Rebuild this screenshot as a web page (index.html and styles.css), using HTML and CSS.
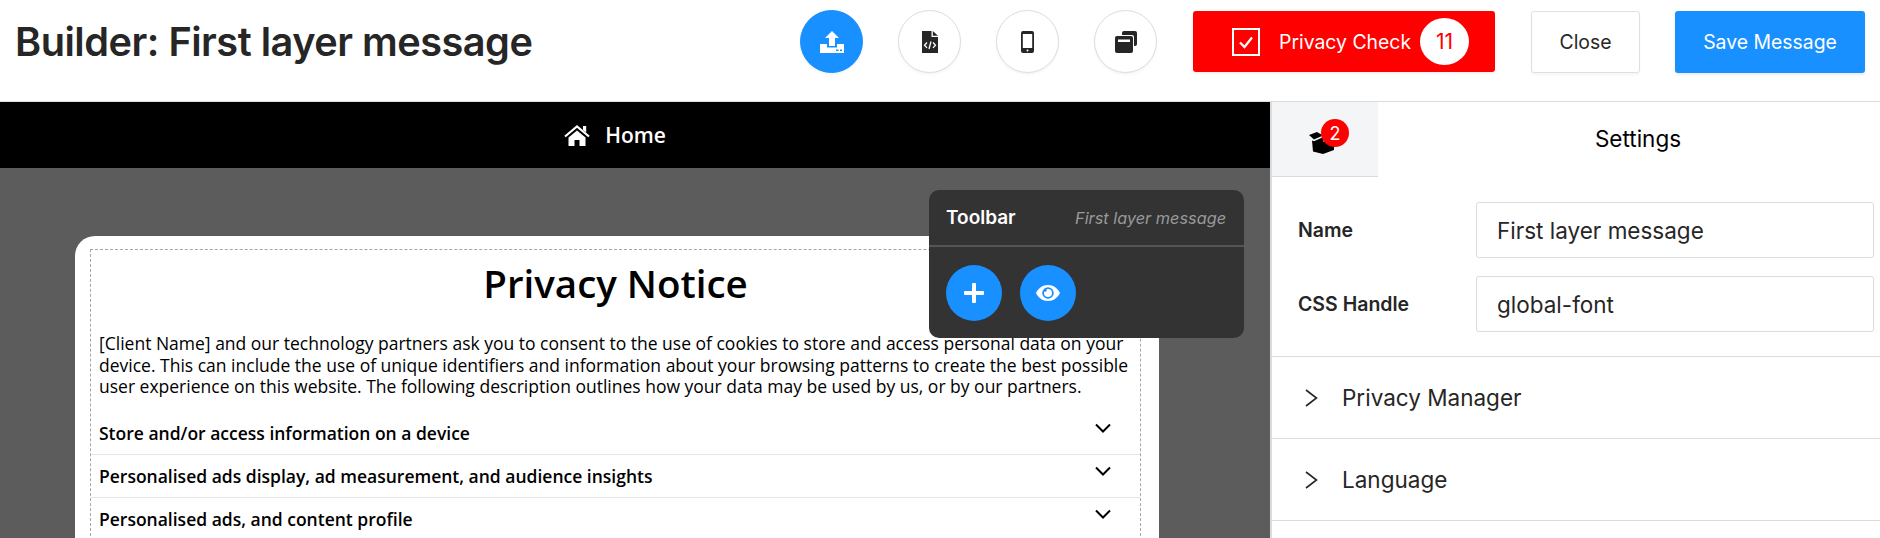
FILE: index.html
```html
<!DOCTYPE html>
<html lang="en">
<head>
  <meta charset="UTF-8">
  <title>Builder: First layer message</title>
  <link rel="stylesheet" href="styles.css">
</head>
<body>

<!-- Top bar -->
<header class="topbar">
  <h1 class="page-title">Builder: First layer message</h1>
  <div class="actions">
    <div class="circle-group">
      <button class="circle active">
        <svg width="24" height="22" viewBox="0 0 24 22"><path fill="#fff" d="M12 0l7 7h-4v8H9V7H5z"/><path fill="#fff" d="M0 13h7v3.500h10V13h7v9H0z"/><rect x="16" y="18.500" width="2.500" height="1.500" fill="#1890ff"/><rect x="20" y="18.500" width="2" height="1.500" fill="#1890ff"/></svg>
      </button>
      <button class="circle">
        <svg width="16" height="22" viewBox="0 0 16 22"><path fill="#262626" d="M0 0h9.500v6H16v16H0z"/><path fill="#262626" d="M10.800 0L16 4.800h-5.200z"/><path fill="none" stroke="#fff" stroke-width="1.300" d="M5 11.500l-2.500 2.700L5 16.900M11 11.500l2.500 2.700L11 16.900M9 10.500l-2 7.500"/></svg>
      </button>
      <button class="circle">
        <svg width="13" height="22" viewBox="0 0 13 22"><rect width="13" height="22" rx="2" fill="#262626"/><rect x="1.800" y="3" width="9.400" height="14" fill="#fff"/><circle cx="6.500" cy="19.500" r="1" fill="#fff"/></svg>
      </button>
      <button class="circle">
        <svg width="22" height="22" viewBox="0 0 22 22"><path fill="#262626" d="M7 2a2 2 0 0 1 2-2h11a2 2 0 0 1 2 2v11a2 2 0 0 1-2 2h-1V6a2 2 0 0 0-2-2H7z"/><rect y="5" width="18" height="17" rx="2" fill="#262626"/><rect x="3" y="8.500" width="12" height="2.500" fill="#fff"/></svg>
      </button>
    </div>
    <button class="check-btn">
      <svg width="28" height="28" viewBox="0 0 28 28"><rect x="1" y="1" width="26" height="26" fill="none" stroke="#fff" stroke-width="2"/><path fill="none" stroke="#fff" stroke-width="2.200" d="M8 14.500l4.500 4.500L20 9.500"/></svg>
      <span class="check-label">Privacy Check</span>
      <span class="check-count">11</span>
    </button>
    <button class="btn-close">Close</button>
    <button class="btn-save">Save Message</button>
  </div>
</header>

<div class="main">
  <!-- Preview -->
  <section class="canvas">
    <nav class="site-nav">
      <svg width="26" height="21" viewBox="0 0 26 21"><path fill="none" stroke="#fff" stroke-width="2.200" d="M1 11.500L13 1.500l12 10"/><path fill="#fff" d="M19 1h3.200v6.500L19 5z"/><path fill="#fff" d="M13 5.500l8.500 7V21H15.500v-6h-5v6H4.500v-8.500z"/></svg>
      <span>Home</span>
    </nav>
    <div class="notice-wrap">
      <div class="notice">
        <div class="notice-inner">
          <h2 class="notice-title">Privacy Notice</h2>
          <p class="notice-text">[Client Name] and our technology partners ask you to consent to the use of cookies to store and access personal data on your device. This can include the use of unique identifiers and information about your browsing patterns to create the best possible user experience on this website. The following description outlines how your data may be used by us, or by our partners.</p>
          <div class="purpose">
            <span>Store and/or access information on a device</span>
            <svg class="chevron" width="16" height="10" viewBox="0 0 16 10"><path d="M1 1.500l7 7 7-7"/></svg>
          </div>
          <div class="purpose">
            <span>Personalised ads display, ad measurement, and audience insights</span>
            <svg class="chevron" width="16" height="10" viewBox="0 0 16 10"><path d="M1 1.500l7 7 7-7"/></svg>
          </div>
          <div class="purpose">
            <span>Personalised ads, and content profile</span>
            <svg class="chevron" width="16" height="10" viewBox="0 0 16 10"><path d="M1 1.500l7 7 7-7"/></svg>
          </div>
        </div>
      </div>
    </div>

    <!-- Floating toolbar -->
    <div class="toolbar">
      <div class="toolbar-head">
        <span class="toolbar-title">Toolbar</span>
        <span class="toolbar-sub">First layer message</span>
      </div>
      <div class="toolbar-body">
        <button class="tool-btn">
          <svg width="20" height="20" viewBox="0 0 20 20"><path fill="#fff" d="M8 1a1 1 0 0 1 1-1h2a1 1 0 0 1 1 1v7h7a1 1 0 0 1 1 1v2a1 1 0 0 1-1 1h-7v7a1 1 0 0 1-1 1H9a1 1 0 0 1-1-1v-7H1a1 1 0 0 1-1-1V9a1 1 0 0 1 1-1h7z"/></svg>
        </button>
        <button class="tool-btn">
          <svg width="24" height="16" viewBox="0 0 24 16"><path fill="#fff" fill-rule="evenodd" d="M12 0c5.500 0 9.800 3.500 12 8-2.200 4.500-6.500 8-12 8S2.200 12.500 0 8c2.200-4.500 6.500-8 12-8zm0 2.200A5.800 5.800 0 1 0 12 13.800 5.800 5.800 0 0 0 12 2.200z"/><path fill="#fff" d="M12 4a4 4 0 1 1-4 4c0-.5.100-1 .300-1.400a1.800 1.800 0 0 0 2.400-2.300C11.100 4.100 11.500 4 12 4z"/></svg>
        </button>
      </div>
    </div>
  </section>

  <!-- Settings panel -->
  <aside class="sidebar">
    <div class="tabs">
      <div class="tab-icon">
        <svg width="26" height="22" viewBox="0 0 26 22"><path fill="#000" d="M0 3l8-3 6 3.500-9 4z"/><path fill="#000" d="M3 8.500l2 .8 9-4 .5 4.700L25 7v11l-11 4-10-2.500z"/></svg>
        <span class="tab-badge">2</span>
      </div>
      <div class="tab-title">Settings</div>
    </div>
    <div class="fields">
      <div class="field">
        <label class="field-label">Name</label>
        <div class="field-input">First layer message</div>
      </div>
      <div class="field">
        <label class="field-label">CSS Handle</label>
        <div class="field-input">global-font</div>
      </div>
    </div>
    <div class="acc-row">
      <svg class="acc-arrow" width="13" height="18" viewBox="0 0 13 18"><path d="M1 1l10.500 8L1 17"/></svg>
      <span>Privacy Manager</span>
    </div>
    <div class="acc-row">
      <svg class="acc-arrow" width="13" height="18" viewBox="0 0 13 18"><path d="M1 1l10.500 8L1 17"/></svg>
      <span>Language</span>
    </div>
  </aside>
</div>

</body>
</html>
```

FILE: styles.css
```css
* {
  box-sizing: border-box;
}

html, body {
  height: 100%;
}

body {
  margin: 0;
  font-family: Inter, Arial, sans-serif;
  color: #262626;
  background: #fff;
  overflow: hidden;
}

button {
  font-family: inherit;
  cursor: pointer;
}

/* top bar */
.topbar {
  height: 102px;
  display: flex;
  align-items: center;
  justify-content: space-between;
  padding: 0 15px 18px 15px;
  border-bottom: 1px solid #dcdcdc;
}

.page-title {
  margin: 0;
  font-size: 39.700px;
  font-weight: 600;
  letter-spacing: -0.5px;
}

.actions {
  display: flex;
  align-items: center;
}

.circle-group {
  display: flex;
  gap: 35px;
  margin-right: 36px;
}

.circle {
  width: 63px;
  height: 63px;
  padding: 0;
  display: flex;
  align-items: center;
  justify-content: center;
  background: #fff;
  border: 1px solid #dcdcdc;
  border-radius: 50%;
  box-shadow: 0 2px 3px rgba(0,0,0,0.04);
}

.circle.active {
  background: #1890ff;
  border-color: #1890ff;
}

.check-btn {
  width: 302px;
  height: 61px;
  display: flex;
  align-items: center;
  padding: 0 0 0 39px;
  background: #f00;
  border: none;
  border-radius: 3px;
  color: #fff;
  font-size: 19.400px;
  box-shadow: 0 2px 3px rgba(0,0,0,0.06);
}

.check-label {
  margin-left: 19px;
  white-space: nowrap;
}

.check-count {
  width: 49px;
  height: 47px;
  margin-left: 9px;
  display: flex;
  align-items: center;
  justify-content: center;
  background: #fff;
  color: #f00;
  font-size: 21px;
  border-radius: 50%;
}

.btn-close {
  width: 109px;
  height: 62px;
  margin-left: 36px;
  background: #fff;
  border: 1px solid #dfdfdf;
  border-radius: 3px;
  color: #262626;
  font-size: 19.400px;
  box-shadow: 0 2px 3px rgba(0,0,0,0.04);
}

.btn-save {
  width: 190px;
  height: 62px;
  margin-left: 35px;
  background: #1890ff;
  border: none;
  border-radius: 3px;
  color: #fff;
  font-size: 19.400px;
  box-shadow: 0 2px 3px rgba(0,0,0,0.08);
}

/* main area */
.main {
  display: flex;
  height: 436px;
}

.canvas {
  position: relative;
  width: 1270px;
  flex-shrink: 0;
  display: flex;
  flex-direction: column;
  background: #5c5c5c;
  overflow: hidden;
}

.site-nav {
  height: 66px;
  flex-shrink: 0;
  display: flex;
  align-items: center;
  justify-content: center;
  gap: 15px;
  padding-right: 40px;
  background: #000;
  color: #fff;
  font-family: "Open Sans", Arial, sans-serif;
  font-size: 21px;
  font-weight: 600;
}

.notice-wrap {
  flex: 1;
  display: flex;
  flex-direction: column;
  padding: 68px 111px 0 75px;
}

.notice {
  flex: 1;
  display: flex;
  flex-direction: column;
  padding: 13px 18px 0 15px;
  background: #fff;
  border-radius: 20px 20px 0 0;
  color: #000;
  font-family: "Open Sans", Arial, sans-serif;
}

.notice-inner {
  flex: 1;
  border: 1px dashed #a6a6a6;
  border-bottom: none;
}

.notice-title {
  margin: 8px 0 0;
  text-align: center;
  font-size: 38.500px;
  line-height: 50px;
  font-weight: 600;
}

.notice-text {
  margin: 25px 8px 14px 8px;
  font-size: 17.500px;
  line-height: 21.500px;
}

.purpose {
  height: 43px;
  display: flex;
  align-items: center;
  justify-content: space-between;
  padding: 0 29px 0 8px;
  font-size: 17.500px;
  font-weight: 600;
  border-bottom: 1px solid #e5e5e5;
}

.chevron {
  margin-top: -9px;
  fill: none;
  stroke: #000;
  stroke-width: 2;
}

/* toolbar */
.toolbar {
  position: absolute;
  left: 929px;
  top: 88px;
  width: 315px;
  height: 148px;
  background: #333;
  border-radius: 10px;
  color: #fff;
}

.toolbar-head {
  height: 57px;
  display: flex;
  align-items: center;
  justify-content: space-between;
  padding: 0 18px 0 17px;
  border-bottom: 2px solid #555;
}

.toolbar-title {
  font-size: 19px;
  font-weight: 600;
}

.toolbar-sub {
  font-size: 16.300px;
  font-style: italic;
  color: #999;
}

.toolbar-body {
  display: flex;
  gap: 18px;
  padding: 18px 17px;
}

.tool-btn {
  width: 56px;
  height: 56px;
  padding: 0;
  display: flex;
  align-items: center;
  justify-content: center;
  background: #1890ff;
  border: none;
  border-radius: 50%;
}

/* sidebar */
.sidebar {
  flex: 1;
  border-left: 2px solid #dcdcdc;
}

.tabs {
  display: flex;
  height: 75px;
}

.tab-icon {
  position: relative;
  width: 106px;
  display: flex;
  align-items: center;
  padding: 8px 0 0 37px;
  background: #f4f5f7;
  border-bottom: 1px solid #dcdcdc;
}

.tab-badge {
  position: absolute;
  left: 49px;
  top: 17px;
  width: 28px;
  height: 28px;
  display: flex;
  align-items: center;
  justify-content: center;
  background: #f00;
  color: #fff;
  font-size: 18px;
  border-radius: 50%;
}

.tab-title {
  flex: 1;
  padding: 0 2px 3px 20px;
  display: flex;
  align-items: center;
  justify-content: center;
  color: #000;
  font-size: 22.500px;
}

.fields {
  height: 180px;
  padding: 25px 6px 0 26px;
  border-bottom: 1px solid #dcdcdc;
}

.field {
  display: flex;
  align-items: center;
  margin-bottom: 18px;
}

.field-label {
  width: 178px;
  flex-shrink: 0;
  font-size: 19.500px;
  font-weight: 600;
}

.field-input {
  flex: 1;
  height: 56px;
  display: flex;
  align-items: center;
  padding: 0 20px;
  border: 1px solid #dcdcdc;
  border-radius: 3px;
  font-size: 22.500px;
}

.acc-row {
  height: 82px;
  display: flex;
  align-items: center;
  padding-left: 33px;
  gap: 24px;
  font-size: 22.500px;
  border-bottom: 1px solid #dcdcdc;
}

.acc-arrow {
  fill: none;
  stroke: #262626;
  stroke-width: 1.600;
}
```
